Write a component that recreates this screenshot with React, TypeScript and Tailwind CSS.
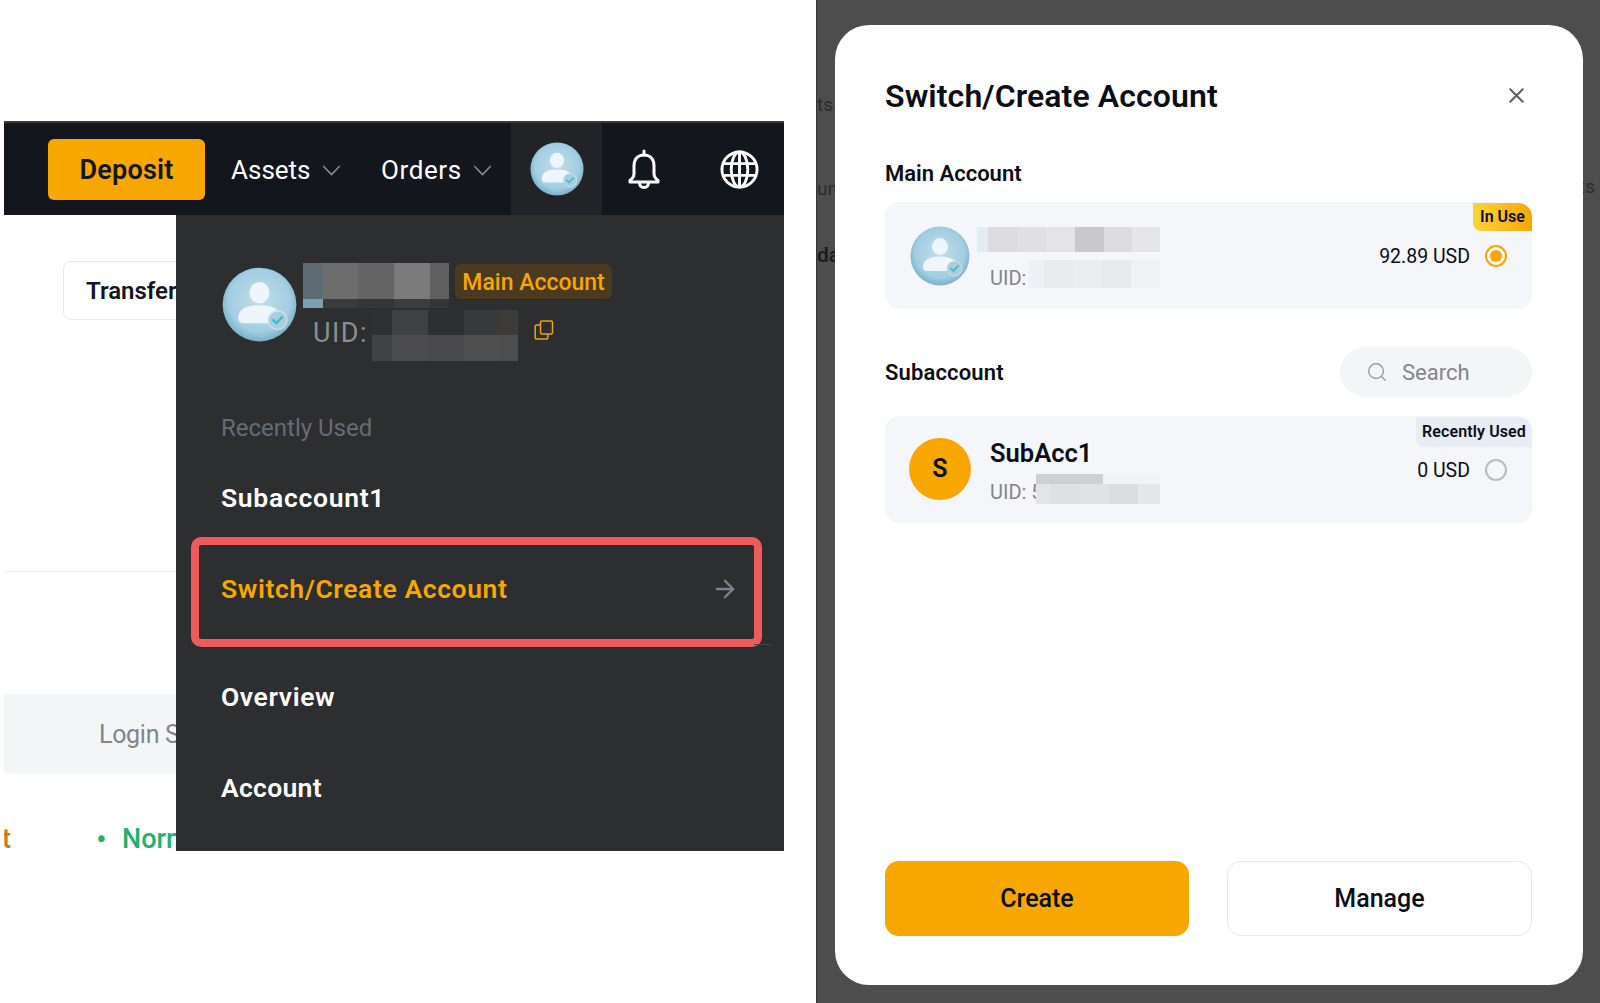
import { ArrowRight, Search, X } from "lucide-react";

type Cell = { w: string; h: string; bg: string };

function UserAvatar({ size }: { size: string }) {
  const id = size.replace(/[^0-9]/g, "");
  return (
    <svg viewBox="0 0 60 60" className={size}>
      <defs>
        <radialGradient id={`ball${id}`} cx="50%" cy="45%" r="58%">
          <stop offset="0%" stopColor="#c3deeb" />
          <stop offset="72%" stopColor="#a3cde1" />
          <stop offset="100%" stopColor="#6fa9c8" />
        </radialGradient>
      </defs>
      <circle cx="30" cy="30" r="29.500" fill={`url(#ball${id})`} />
      <ellipse cx="30" cy="20.500" rx="8" ry="8.500" fill="#eef6fb" />
      <path d="M13 41c0-7 6-10.500 17-10.500s17 3.500 17 10.500c0 3-2 4-5 4H18c-3 0-5-1-5-4z" fill="#eef5fb" />
      <circle cx="44.500" cy="42.500" r="7.500" fill="#a9cddd" stroke="#cfe3ec" strokeWidth="1" />
      <path d="M41 42.500l2.500 2.500 4.500-5" fill="none" stroke="#2fbcd6" strokeWidth="1.700" strokeLinecap="round" />
    </svg>
  );
}

function NavChevron() {
  return (
    <svg viewBox="0 0 20 12" className="w-[19px] h-[11px] ml-[11px]" fill="none" stroke="#8a8d93" strokeWidth="1.600">
      <path d="M1 1l9 9.500L19 1" />
    </svg>
  );
}

function BellIcon() {
  return (
    <svg viewBox="0 0 36 40" className="w-[36px] h-[40px]" fill="none" stroke="#ffffff" strokeWidth="3" strokeLinejoin="round" strokeLinecap="round">
      <path d="M18 2v4" />
      <path d="M18 6c-6.500 0-10 4.500-10 11v8c0 2.500-1.500 4.500-4 6.500v1.500h28v-1.500c-2.500-2-4-4-4-6.500v-8c0-6.500-3.500-11-10-11z" />
      <path d="M13.500 33.500c0 3.500 2 5 4.500 5s4.500-1.500 4.500-5" />
    </svg>
  );
}

function GlobeIcon() {
  return (
    <svg viewBox="0 0 40 40" className="w-[39px] h-[39px]" fill="none" stroke="#ffffff" strokeWidth="3">
      <circle cx="20" cy="20" r="18" />
      <ellipse cx="20" cy="20" rx="8.500" ry="18" />
      <path d="M20 2v36M3.500 14h33M3.500 26h33" />
    </svg>
  );
}

function CopyIcon() {
  return (
    <svg viewBox="0 0 20 20" className="w-[20px] h-[20px]" fill="none" stroke="#f0a30a" strokeWidth="1.500">
      <rect x="6.500" y="1" width="12" height="13" rx="1.500" />
      <path d="M6.500 5H3c-1 0-1.800.8-1.800 1.800v10.400c0 1 .8 1.800 1.800 1.800h9c1 0 1.800-.8 1.800-1.800V14" />
    </svg>
  );
}

function Mosaic({ cells, className }: { cells: Cell[]; className: string }) {
  return (
    <div className={`absolute flex flex-wrap ${className}`}>
      {cells.map((c, i) => (
        <div key={i} className={`${c.w} ${c.h} ${c.bg}`} />
      ))}
    </div>
  );
}

const darkName: Cell[] = [
  { w: "w-[20px]", h: "h-[36px]", bg: "bg-[#5c6a74]" },
  { w: "w-[35px]", h: "h-[36px]", bg: "bg-[#6c6c6c]" },
  { w: "w-[36px]", h: "h-[36px]", bg: "bg-[#646464]" },
  { w: "w-[36px]", h: "h-[36px]", bg: "bg-[#7b7b7b]" },
  { w: "w-[19px]", h: "h-[36px]", bg: "bg-[#5f5f5f]" },
  { w: "w-[20px]", h: "h-[9px]", bg: "bg-[#7c9fb4]" },
  { w: "w-[35px]", h: "h-[9px]", bg: "bg-[#393a3c]" },
  { w: "w-[36px]", h: "h-[9px]", bg: "bg-[#343537]" },
  { w: "w-[36px]", h: "h-[9px]", bg: "bg-[#3c3d3f]" },
  { w: "w-[19px]", h: "h-[9px]", bg: "bg-[#343537]" },
];

const darkUid: Cell[] = [
  { w: "w-[20px]", h: "h-[25px]", bg: "bg-[#2f3032]" },
  { w: "w-[36px]", h: "h-[25px]", bg: "bg-[#3f4042]" },
  { w: "w-[36px]", h: "h-[25px]", bg: "bg-[#2e2f31]" },
  { w: "w-[36px]", h: "h-[25px]", bg: "bg-[#38393a]" },
  { w: "w-[18px]", h: "h-[25px]", bg: "bg-[#3c3b38]" },
  { w: "w-[20px]", h: "h-[26px]", bg: "bg-[#414244]" },
  { w: "w-[36px]", h: "h-[26px]", bg: "bg-[#4c4c4e]" },
  { w: "w-[36px]", h: "h-[26px]", bg: "bg-[#4a4a4c]" },
  { w: "w-[36px]", h: "h-[26px]", bg: "bg-[#4f4f50]" },
  { w: "w-[18px]", h: "h-[26px]", bg: "bg-[#4d4d4e]" },
];

const lightName: Cell[] = [
  { w: "w-[11px]", h: "h-[25px]", bg: "bg-[#e4ecf3]" },
  { w: "w-[30px]", h: "h-[25px]", bg: "bg-[#dcdcde]" },
  { w: "w-[28px]", h: "h-[25px]", bg: "bg-[#e0e0e2]" },
  { w: "w-[29px]", h: "h-[25px]", bg: "bg-[#e4e4e6]" },
  { w: "w-[29px]", h: "h-[25px]", bg: "bg-[#c9c9cc]" },
  { w: "w-[28px]", h: "h-[25px]", bg: "bg-[#dcdcde]" },
  { w: "w-[28px]", h: "h-[25px]", bg: "bg-[#e6e6e9]" },
];

const lightUid: Cell[] = [
  { w: "w-[15px]", h: "h-[28px]", bg: "bg-[#eff0f3]" },
  { w: "w-[29px]", h: "h-[28px]", bg: "bg-[#eaebee]" },
  { w: "w-[29px]", h: "h-[28px]", bg: "bg-[#ecedf0]" },
  { w: "w-[29px]", h: "h-[28px]", bg: "bg-[#e8e9ec]" },
  { w: "w-[29px]", h: "h-[28px]", bg: "bg-[#f0f1f4]" },
];

const subUid: Cell[] = [
  { w: "w-[67px]", h: "h-[10px]", bg: "bg-[#cfd0d3]" },
  { w: "w-[57px]", h: "h-[10px]", bg: "bg-[#f2f3f6]" },
  { w: "w-[15px]", h: "h-[20px]", bg: "bg-[#e3e4e8]" },
  { w: "w-[29px]", h: "h-[20px]", bg: "bg-[#dfe0e4]" },
  { w: "w-[29px]", h: "h-[20px]", bg: "bg-[#e1e2e6]" },
  { w: "w-[29px]", h: "h-[20px]", bg: "bg-[#dcdde1]" },
  { w: "w-[22px]", h: "h-[20px]", bg: "bg-[#e6e7ea]" },
];

export default function App() {
  return (
    <div className="flex w-[1600px] h-[1003px] overflow-hidden bg-white font-[Roboto,sans-serif]">
      {/* Left: account dropdown */}
      <div className="w-[784px] pl-[4px] pt-[121px] shrink-0">
        <div className="flex items-center h-[94px] bg-[#14161d] border-t-2 border-[#3a3a3a]">
          <div className="ml-[44px] w-[157px] h-[61px] rounded-md bg-[#f8a600] flex items-center justify-center pt-[2px] text-[27px] tracking-[0.2px] font-semibold text-[#14161d]">
            Deposit
          </div>
          <div className="ml-[26px] flex items-center w-[150px] pt-[2px] text-[26px] text-white">
            Assets
            <NavChevron />
          </div>
          <div className="flex items-center w-[130px] pt-[2px] text-[26px] tracking-[0.6px] text-white">
            Orders
            <NavChevron />
          </div>
          <div className="w-[91px] h-full bg-[#212327] flex items-center justify-center pl-[1px]">
            <UserAvatar size="w-[54px] h-[54px]" />
          </div>
          <div className="ml-[24px] flex items-center">
            <BellIcon />
          </div>
          <div className="ml-[58px] flex items-center">
            <GlobeIcon />
          </div>
        </div>

        <div className="flex h-[636px]">
          <div className="w-[172px] shrink-0 overflow-hidden whitespace-nowrap">
            <div className="ml-[59px] mt-[46px] w-[200px] h-[59px] rounded-lg border-[1.5px] border-[#e6e7eb] flex items-center pl-[22px] text-[24px] font-semibold text-[#14161d]">
              Transfer
            </div>
            <div className="mt-[251px] h-px bg-[#eceef2]" />
            <div className="mt-[122px] h-[79px] pl-[95px] pt-[2px] flex items-center bg-[#f4f5f7] text-[25px] tracking-[-0.3px] text-[#81858c]">
              Login Status
            </div>
            <div className="mt-[50px] h-[32px] flex items-center text-[27px]">
              <span className="w-[94px] shrink-0 -ml-[2px] font-medium text-[#d9760a]">t</span>
              <span className="w-[26px] shrink-0 text-[32px] leading-none text-[#20b26c]">•</span>
              <span className="font-medium text-[#20b26c]">Normal</span>
            </div>
          </div>

          <div className="w-[608px] bg-[#2d2e30] flex flex-col">
            <div className="relative h-[198px] shrink-0">
              <div className="absolute left-[46px] top-[52px]">
                <UserAvatar size="w-[75px] h-[75px]" />
              </div>
              <Mosaic cells={darkName} className="left-[127px] top-[48px] w-[146px]" />
              <div className="absolute left-[279px] top-[49px] w-[157px] h-[35px] rounded-md bg-[#4a3b20] flex items-center justify-center pt-[3px] text-[23px] font-medium text-[#f8a600]">
                Main Account
              </div>
              <span className="absolute left-[137px] top-[103px] text-[27px] tracking-[1.5px] leading-[30px] text-[#8b8d91]">UID:</span>
              <Mosaic cells={darkUid} className="left-[196px] top-[95px] w-[146px]" />
              <div className="absolute left-[358px] top-[105px]">
                <CopyIcon />
              </div>
            </div>
            <div className="ml-[45px] h-[30px] flex items-center text-[24px] text-[#686b72]">Recently Used</div>
            <div className="ml-[45px] mt-[40px] h-[30px] flex items-center text-[26.500px] tracking-[0.7px] font-semibold text-white">Subaccount1</div>
            <div className="relative ml-[15px] mt-[24px] w-[571px] h-[110px] shrink-0 rounded-[10px] border-[8px] border-[#ef5a5a] flex items-center justify-between pl-[22px] pr-[14px] pb-[6px]">
              <span className="text-[26.500px] tracking-[0.6px] font-semibold text-[#f8a600]">Switch/Create Account</span>
              <ArrowRight className="w-[28px] h-[28px] mr-[1px] text-[#7d8087]" strokeWidth={2} />
              <div className="absolute left-[555px] -right-[17px] bottom-[-6px] h-px bg-[#46484c]" />
            </div>
            <div className="ml-[45px] mt-[35px] h-[30px] flex items-center text-[26.500px] tracking-[0.6px] font-semibold text-white">Overview</div>
            <div className="ml-[45px] mt-[61px] h-[30px] flex items-center text-[26.500px] tracking-[0.3px] font-semibold text-white">Account</div>
          </div>
        </div>
      </div>

      {/* Right: switch/create modal */}
      <div className="relative ml-[32px] w-[784px] h-full shrink-0 bg-[#4d4d4d] border-l border-[#333333] pl-[18px] pt-[25px]">
        <span className="absolute left-[0px] top-[91px] text-[19px] text-[#2c2c2c]">ts</span>
        <span className="absolute left-[0px] top-[175px] text-[19px] text-[#2c2c2c]">un</span>
        <span className="absolute left-[0px] top-[240px] text-[21px] font-semibold text-[#1c1c1c]">da</span>
        <span className="absolute right-[5px] top-[173px] text-[19px] text-[#2c2c2c]">ts</span>

        <div className="relative w-[748px] h-[960px] rounded-[34px] bg-white pl-[50px] pr-[51px] pt-[53px] pb-[49px] flex flex-col">
          <div className="flex items-center justify-between h-[36px]">
            <h1 className="text-[32px] tracking-[0.1px] font-semibold text-[#0b0e14]">Switch/Create Account</h1>
            <X className="w-[25px] h-[25px] mr-[3px] -mt-[1px] text-[#5f6269]" strokeWidth={2} />
          </div>

          <div className="mt-[46px] h-[26px] flex items-center text-[22px] font-semibold text-[#0b0e14]">Main Account</div>

          <div className="relative mt-[16px] h-[107px] shrink-0 rounded-[14px] bg-[#f5f6fa] flex items-start pl-[25px] pr-[25px]">
            <div className="mt-[24px]">
              <UserAvatar size="w-[60px] h-[60px]" />
            </div>
            <div className="ml-[20px] mt-[66px] h-[20px] flex items-center text-[20px] text-[#81858c]">UID:</div>
            <Mosaic cells={lightName} className="left-[92px] top-[25px] w-[183px]" />
            <Mosaic cells={lightUid} className="left-[144px] top-[58px] w-[131px]" />
            <div className="ml-auto h-full flex items-center">
              <span className="pt-[2px] text-[19.500px] text-[#0b0e14]">92.89 USD</span>
              <div className="ml-[15px] w-[22px] h-[22px] rounded-full border-2 border-[#f8a600] flex items-center justify-center">
                <div className="w-[12px] h-[12px] rounded-full bg-[#f8a600]" />
              </div>
            </div>
            <div className="absolute right-0 top-[1px] w-[59px] h-[28px] rounded-tr-[14px] rounded-bl-[8px] bg-gradient-to-r from-[#fcd535] to-[#f8a600] flex items-center justify-center text-[16px] font-semibold text-[#0b0e14]">
              In Use
            </div>
          </div>

          <div className="mt-[38px] h-[50px] flex items-center justify-between">
            <span className="text-[22px] tracking-[0.15px] font-semibold text-[#0b0e14]">Subaccount</span>
            <div className="w-[192px] h-[50px] rounded-full bg-[#f4f5f7] flex items-center pl-[26px] text-[22px] text-[#81858c]">
              <Search className="w-[22px] h-[22px] mr-[14px] text-[#9a9da3]" strokeWidth={1.6} />
              Search
            </div>
          </div>

          <div className="relative mt-[19px] h-[107px] shrink-0 rounded-[14px] bg-[#f5f6fa] flex items-start pl-[24px] pr-[25px]">
            <div className="mt-[22px] w-[62px] h-[62px] rounded-full bg-[#f8a600] flex items-center justify-center text-[25px] font-semibold text-[#0b0e14]">
              S
            </div>
            <div className="ml-[19px] pt-[22px] flex flex-col">
              <span className="h-[30px] flex items-center text-[25.500px] font-semibold text-[#0b0e14]">SubAcc1</span>
              <span className="mt-[14px] h-[20px] flex items-center text-[20px] text-[#81858c]">UID: 5</span>
            </div>
            <Mosaic cells={subUid} className="left-[151px] top-[58px] w-[124px]" />
            <div className="ml-auto h-full flex items-center">
              <span className="pt-[2px] text-[19.500px] text-[#0b0e14]">0 USD</span>
              <div className="ml-[15px] w-[22px] h-[22px] rounded-full border-2 border-[#b7bac0]" />
            </div>
            <div className="absolute right-0 top-[1px] w-[116px] h-[30px] rounded-tr-[14px] rounded-bl-[8px] bg-[#e8ecf5] flex items-center justify-center text-[16px] tracking-[0.1px] font-semibold text-[#0b0e14]">
              Recently Used
            </div>
          </div>

          <div className="mt-auto flex gap-[38px]">
            <div className="w-[304px] h-[75px] rounded-[14px] bg-[#f8a600] flex items-center justify-center text-[25px] font-medium text-[#0b0e14]">
              Create
            </div>
            <div className="w-[305px] h-[75px] rounded-[14px] border-[1.5px] border-[#e6e7eb] flex items-center justify-center text-[25px] font-medium text-[#0b0e14]">
              Manage
            </div>
          </div>
        </div>
      </div>
    </div>
  );
}
